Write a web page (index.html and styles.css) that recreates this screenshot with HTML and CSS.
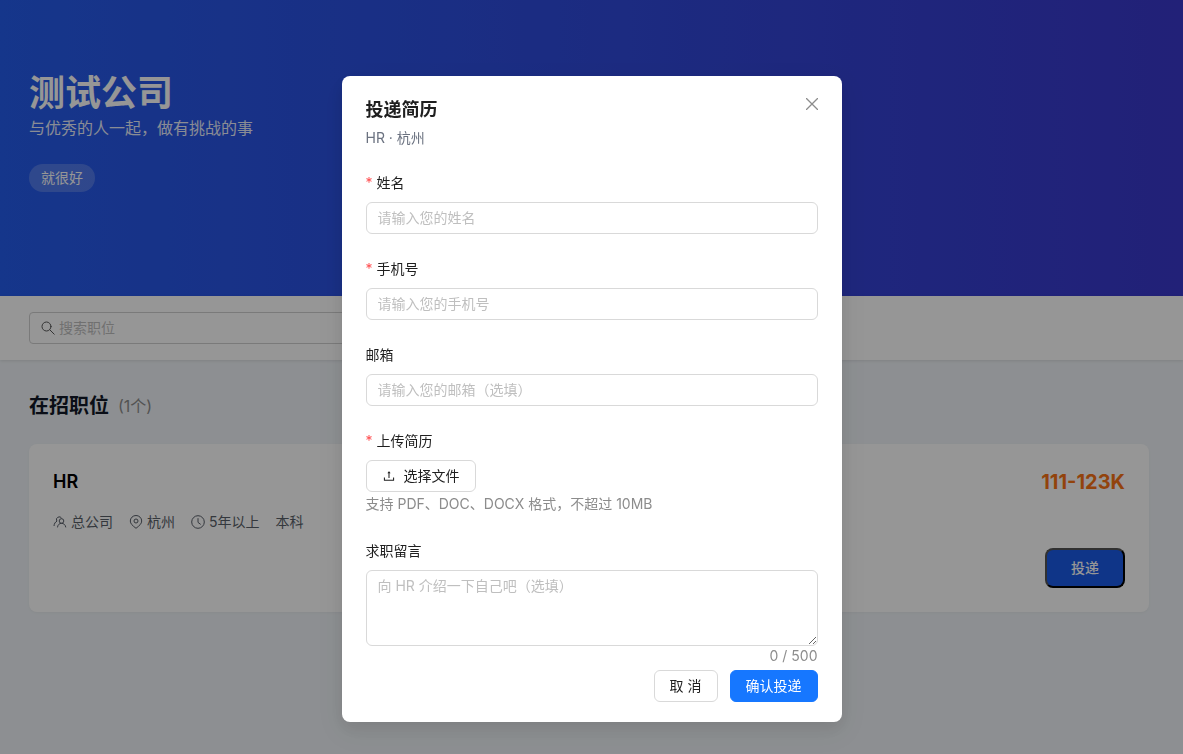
FILE: index.html
```html
<!DOCTYPE html>
<html lang="zh-CN">
<head>
    <meta charset="UTF-8">
    <meta name="viewport" content="width=device-width, initial-scale=1.0">
    <title>测试公司 - 在招职位</title>
    <link rel="stylesheet" href="styles.css">
</head>
<body>

    <!-- 公司介绍 -->
    <header class="hero">
        <h1>测试公司</h1>
        <p class="slogan">与优秀的人一起，做有挑战的事</p>
        <span class="tag">就很好</span>
    </header>

    <!-- 搜索栏 -->
    <div class="search-bar">
        <label class="search-box">
            <svg class="icon" viewBox="0 0 14 14" fill="none" stroke="currentColor" stroke-linecap="round" aria-hidden="true"><circle cx="5.500" cy="5.500" r="4.500"/><path d="M8.800 8.800L13.200 13.200"/></svg>
            <input type="text" placeholder="搜索职位" aria-label="搜索职位">
        </label>
    </div>

    <!-- 职位列表 -->
    <main class="jobs">
        <h2>在招职位 <span class="count">(1个)</span></h2>

        <article class="job-card">
            <div class="job-info">
                <h3>HR</h3>
                <ul class="job-meta">
                    <li>
                        <svg class="icon" viewBox="0 0 14 14" fill="none" stroke="currentColor" aria-hidden="true"><path d="M8.700 3.300A2.700 2.700 0 1 0 3.800 6M4 6.200C2.200 7 1.200 8.600 1 11"/><circle cx="8.500" cy="6" r="2.300"/><path d="M4.500 12.400c.2-2.500 1.800-4.100 4-4.100s4 1.600 4.300 4.100"/></svg>
                        总公司
                    </li>
                    <li>
                        <svg class="icon" viewBox="0 0 14 14" fill="none" stroke="currentColor" aria-hidden="true"><path d="M7 13.300C3.500 10.600 1.300 8.700 1.300 6a5.700 5.500 0 0 1 11.400 0c0 2.700-2.200 4.600-5.700 7.300z"/><circle cx="7" cy="6" r="2"/></svg>
                        杭州
                    </li>
                    <li>
                        <svg class="icon" viewBox="0 0 14 14" fill="none" stroke="currentColor" aria-hidden="true"><circle cx="7" cy="7" r="6.300"/><path d="M7 3.200v4.200l2.700 2"/></svg>
                        5年以上
                    </li>
                    <li>本科</li>
                </ul>
            </div>
            <div class="job-side">
                <span class="salary">111-123K</span>
                <button type="button" class="apply">投递</button>
            </div>
        </article>
    </main>

    <!-- 投递简历弹窗 -->
    <div class="mask">
        <form class="modal" role="dialog" aria-labelledby="modalTitle">
            <div class="modal-header">
                <div>
                    <h2 id="modalTitle">投递简历</h2>
                    <p>HR · 杭州</p>
                </div>
                <button type="button" class="close" aria-label="关闭">
                    <svg viewBox="0 0 12 12" fill="none" stroke="currentColor" stroke-width="1.300" aria-hidden="true"><path d="M0 0l12 12M12 0L0 12"/></svg>
                </button>
            </div>

            <div class="field">
                <label class="required" for="name">姓名</label>
                <input type="text" id="name" placeholder="请输入您的姓名">
            </div>

            <div class="field">
                <label class="required" for="phone">手机号</label>
                <input type="tel" id="phone" placeholder="请输入您的手机号">
            </div>

            <div class="field">
                <label for="email">邮箱</label>
                <input type="email" id="email" placeholder="请输入您的邮箱（选填）">
            </div>

            <div class="field">
                <label class="required" for="resume">上传简历</label>
                <button type="button" id="resume" class="btn">
                    <svg class="icon" viewBox="0 0 1024 1024" fill="currentColor" aria-hidden="true"><path d="M400 317.7h73.9V656c0 4.4 3.6 8 8 8h60c4.4 0 8-3.6 8-8V317.7H624c6.7 0 10.4-7.7 6.3-12.9L518.3 163a8 8 0 00-12.6 0l-112 141.7c-4.1 5.3-.4 13 6.3 13zM878 626h-60c-4.4 0-8 3.6-8 8v154H214V634c0-4.4-3.6-8-8-8h-60c-4.4 0-8 3.6-8 8v198c0 17.7 14.3 32 32 32h684c17.7 0 32-14.3 32-32V634c0-4.4-3.6-8-8-8z"/></svg>
                    选择文件
                </button>
                <p class="hint">支持 PDF、DOC、DOCX 格式，不超过 10MB</p>
            </div>

            <div class="field message">
                <label for="message">求职留言</label>
                <textarea id="message" maxlength="500" placeholder="向 HR 介绍一下自己吧（选填）"></textarea>
                <span class="counter">0 / 500</span>
            </div>

            <div class="modal-footer">
                <button type="button" class="btn">取 消</button>
                <button type="submit" class="btn primary">确认投递</button>
            </div>
        </form>
    </div>

</body>
</html>
```
FILE: styles.css
```css
* {
    box-sizing: border-box;
}

body {
    margin: 0;
    min-height: 100vh;
    font-family: Inter, "Noto Sans CJK SC", sans-serif;
    font-size: 14px;
    line-height: 22px;
    color: #1f1f1f;
    background-color: #f0f4f8;
}

h1, h2, h3, p, ul {
    margin: 0;
    padding: 0;
}

button, input, textarea {
    font: inherit;
    color: inherit;
}

button {
    cursor: pointer;
}

.icon {
    width: 14px;
    height: 14px;
    flex: none;
}

/* 公司介绍 */
.hero {
    padding: 72px 34px 104px 29px;
    color: #fff;
    background: linear-gradient(90deg, #255cec, #3a38cc);
}

.hero h1 {
    font-size: 36px;
    line-height: 42px;
}

.slogan {
    margin: 2px 0 24px;
    font-size: 16px;
    line-height: 24px;
    opacity: 0.9;
}

.tag {
    display: inline-block;
    vertical-align: top;
    padding: 0 12px;
    line-height: 28px;
    border-radius: 14px;
    background-color: rgba(255, 255, 255, 0.2);
}

/* 搜索栏 */
.search-bar {
    padding: 16px 34px 16px 29px;
    background-color: #fff;
    box-shadow: 0 1px 3px rgba(0, 0, 0, 0.1);
}

.search-box {
    display: flex;
    align-items: center;
    gap: 4px;
    max-width: 500px;
    height: 32px;
    padding: 0 11px;
    border: 1px solid #d0d0d0;
    border-radius: 4px;
    color: #595959;
}

.search-box input {
    flex: 1;
    min-width: 0;
    padding: 0;
    border: none;
    outline: none;
    background: none;
}

::placeholder {
    color: #bfbfbf;
    opacity: 1;
}

/* 职位列表 */
.jobs {
    padding: 32px 34px 32px 29px;
}

.jobs h2 {
    display: flex;
    align-items: center;
    gap: 9px;
    height: 28px;
    margin-bottom: 24px;
    font-size: 20px;
    line-height: 28px;
    color: #111827;
}

.count {
    font-size: 16px;
    font-weight: 400;
    color: #8c8c8c;
}

.job-card {
    display: flex;
    justify-content: space-between;
    min-height: 168px;
    padding: 24px;
    border-radius: 8px;
    background-color: #fff;
    box-shadow: 0 1px 3px rgba(0, 0, 0, 0.04);
}

.job-card h3 {
    margin-bottom: 16px;
    font-size: 18px;
    font-weight: 600;
    line-height: 28px;
    color: #000;
}

.job-meta {
    display: flex;
    gap: 16px;
    line-height: 20px;
    color: #595f69;
    list-style: none;
}

.job-meta li {
    display: flex;
    align-items: center;
    gap: 4px;
}

.job-side {
    display: flex;
    flex-direction: column;
    justify-content: space-between;
    align-items: flex-end;
}

.salary {
    font-size: 20px;
    font-weight: 700;
    line-height: 28px;
    color: #f97316;
}

.apply {
    width: 80px;
    height: 40px;
    padding: 0;
    font-weight: 500;
    color: #fff;
    background-color: #1a5be8;
    border: 2px outset #000;
    border-radius: 8px;
}

/* 弹窗 */
.mask {
    position: fixed;
    inset: 0;
    display: flex;
    justify-content: center;
    align-items: flex-start;
    padding: 76px 16px 32px;
    overflow: auto;
    background-color: rgba(0, 0, 0, 0.41);
}

.modal {
    width: 100%;
    max-width: 500px;
    padding: 20px 24px;
    border-radius: 8px;
    background-color: #fff;
    box-shadow: 0 6px 16px rgba(0, 0, 0, 0.08), 0 9px 28px 8px rgba(0, 0, 0, 0.05);
}

.modal-header {
    display: flex;
    justify-content: space-between;
    align-items: flex-start;
    margin-bottom: 24px;
}

.modal-header h2 {
    margin-bottom: 4px;
    font-size: 18px;
    line-height: 28px;
}

.modal-header p {
    line-height: 20px;
    color: #6b7280;
}

.close {
    display: flex;
    padding: 2px 0;
    border: none;
    color: #8c8c8c;
    background: none;
}

.close svg {
    width: 12px;
    height: 12px;
}

.field {
    display: flex;
    flex-direction: column;
    align-items: flex-start;
    margin-bottom: 24px;
}

.field label {
    margin-bottom: 8px;
}

.required::before {
    content: "*";
    margin-right: 4px;
    color: #ff4d4f;
}

.field input,
.field textarea {
    width: 100%;
    height: 32px;
    padding: 4px 11px 6px;
    border: 1px solid #d9d9d9;
    border-radius: 6px;
    background-color: #fff;
}

.field textarea {
    height: 76px;
    resize: vertical;
}

.hint {
    line-height: 24px;
    color: #8c8c8c;
}

.message {
    margin-bottom: 4px;
}

.counter {
    align-self: flex-end;
    line-height: 20px;
    color: #8c8c8c;
}

.btn {
    display: flex;
    align-items: center;
    gap: 8px;
    height: 32px;
    padding: 0 15px;
    border: 1px solid #d9d9d9;
    border-radius: 6px;
    background-color: #fff;
}

.btn.primary {
    color: #fff;
    border-color: #1677ff;
    background-color: #1677ff;
}

.modal-footer {
    display: flex;
    justify-content: flex-end;
    gap: 12px;
}
```
